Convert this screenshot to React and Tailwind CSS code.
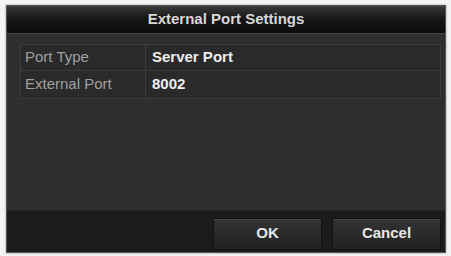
export default function App() {
  return (
    <div className="w-[451px] h-[256px] bg-[#f4f4f4] pt-[5px] pl-[6px] pr-[5px] pb-[3px]" style={{ fontFamily: '"Liberation Sans", Arial, sans-serif' }}>
      <div className="w-full h-full flex flex-col bg-[#2e2e2e] border border-[#555] shadow-[0_0_2px_rgba(0,0,0,0.4)]">
        <div className="h-[28px] flex items-center justify-center bg-gradient-to-b from-[#3a3a3a] via-[#151515] to-[#0c0c0c] border-b border-[#444]">
          <span className="text-[15px] font-bold text-[#d8d8d8]">External Port Settings</span>
        </div>
        <div className="flex-1 pl-[13px] pr-[4px] pt-[10px]">
          <div className="border border-[#3c3c3c] bg-[#2a2a2a]">
            <div className="flex h-[26px] border-b border-[#3c3c3c]">
              <div className="w-[125px] border-r border-[#3c3c3c] flex items-center pl-[4px] text-[15px] text-[#a0a0a0]">Port Type</div>
              <div className="flex-1 flex items-center pl-[6px] text-[15px] font-bold text-[#eeeeee]">Server Port</div>
            </div>
            <div className="flex h-[27px]">
              <div className="w-[125px] border-r border-[#3c3c3c] flex items-center pl-[4px] text-[15px] text-[#a0a0a0]">External Port</div>
              <div className="flex-1 flex items-center pl-[6px] text-[15px] font-bold text-[#eeeeee]">8002</div>
            </div>
          </div>
        </div>
        <div className="h-[42px] bg-[#1b1b1b] border-t border-[#242424] flex items-center justify-end gap-[10px] pr-[4px] pt-[4px]">
          <button className="w-[109px] h-[32px] bg-gradient-to-b from-[#333] to-[#222] border border-[#111] shadow-[inset_0_1px_0_#444] text-[15px] font-bold text-[#e6e6e6]">OK</button>
          <button className="w-[109px] h-[32px] bg-gradient-to-b from-[#333] to-[#222] border border-[#111] shadow-[inset_0_1px_0_#444] text-[15px] font-bold text-[#e6e6e6]">Cancel</button>
        </div>
      </div>
    </div>
  );
}
